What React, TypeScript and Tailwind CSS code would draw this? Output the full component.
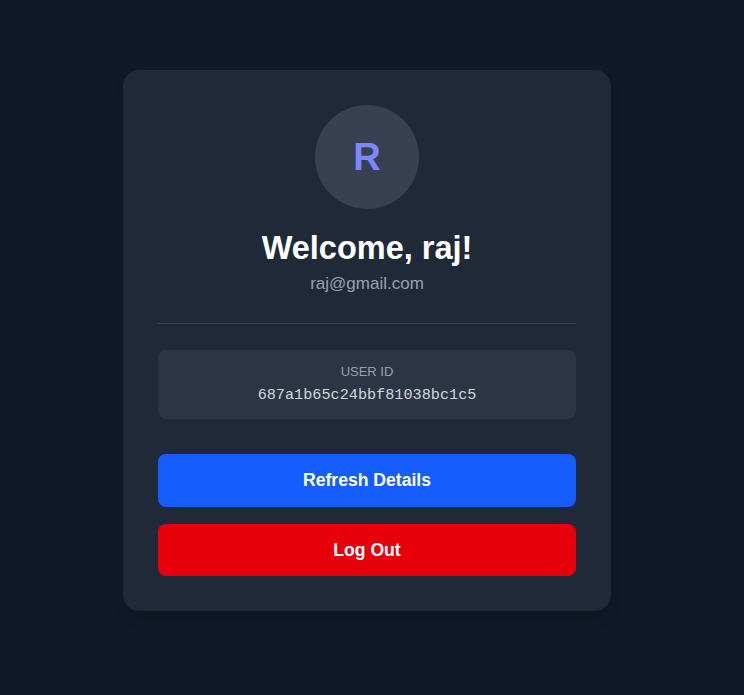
import React from "react";

export default function App() {
  return (
    <div
      className="min-h-[695px] w-full bg-[#111827] flex justify-center pr-[10px] pt-[70px]"
      style={{ fontFamily: '"Liberation Sans", Arial, sans-serif' }}
    >
      <div className="w-[488px] h-[541px] bg-[#1f2937] rounded-2xl shadow-lg p-[35px] flex flex-col">
        <div className="flex justify-center">
          <div className="w-[104px] h-[104px] rounded-full bg-[#374151] flex items-center justify-center">
            <span className="text-[38px] leading-none font-bold text-indigo-400">R</span>
          </div>
        </div>
        <h1 className="mt-[19px] text-[32.5px] leading-[40px] font-bold text-white text-center">
          Welcome, raj!
        </h1>
        <p className="mt-[4px] text-[17px] leading-[24px] text-gray-400 text-center">raj@gmail.com</p>
        <div className="mt-[27px] h-px bg-[#374151]" />
        <div className="mt-[26px] h-[69px] rounded-lg bg-[#2b3544] flex flex-col items-center pt-[12px]">
          <span className="text-[13px] leading-[20px] text-gray-400 uppercase">User ID</span>
          <span
            className="mt-[2px] text-[15.2px] leading-[22px] text-gray-300"
            style={{ fontFamily: '"Liberation Mono", "Courier New", monospace' }}
          >
            687a1b65c24bbf81038bc1c5
          </span>
        </div>
        <button className="mt-[35px] h-[53px] rounded-lg bg-blue-600 text-white font-bold text-[17.6px]">
          Refresh Details
        </button>
        <button className="mt-[17px] h-[52px] rounded-lg bg-red-600 text-white font-bold text-[17.6px]">
          Log Out
        </button>
      </div>
    </div>
  );
}
